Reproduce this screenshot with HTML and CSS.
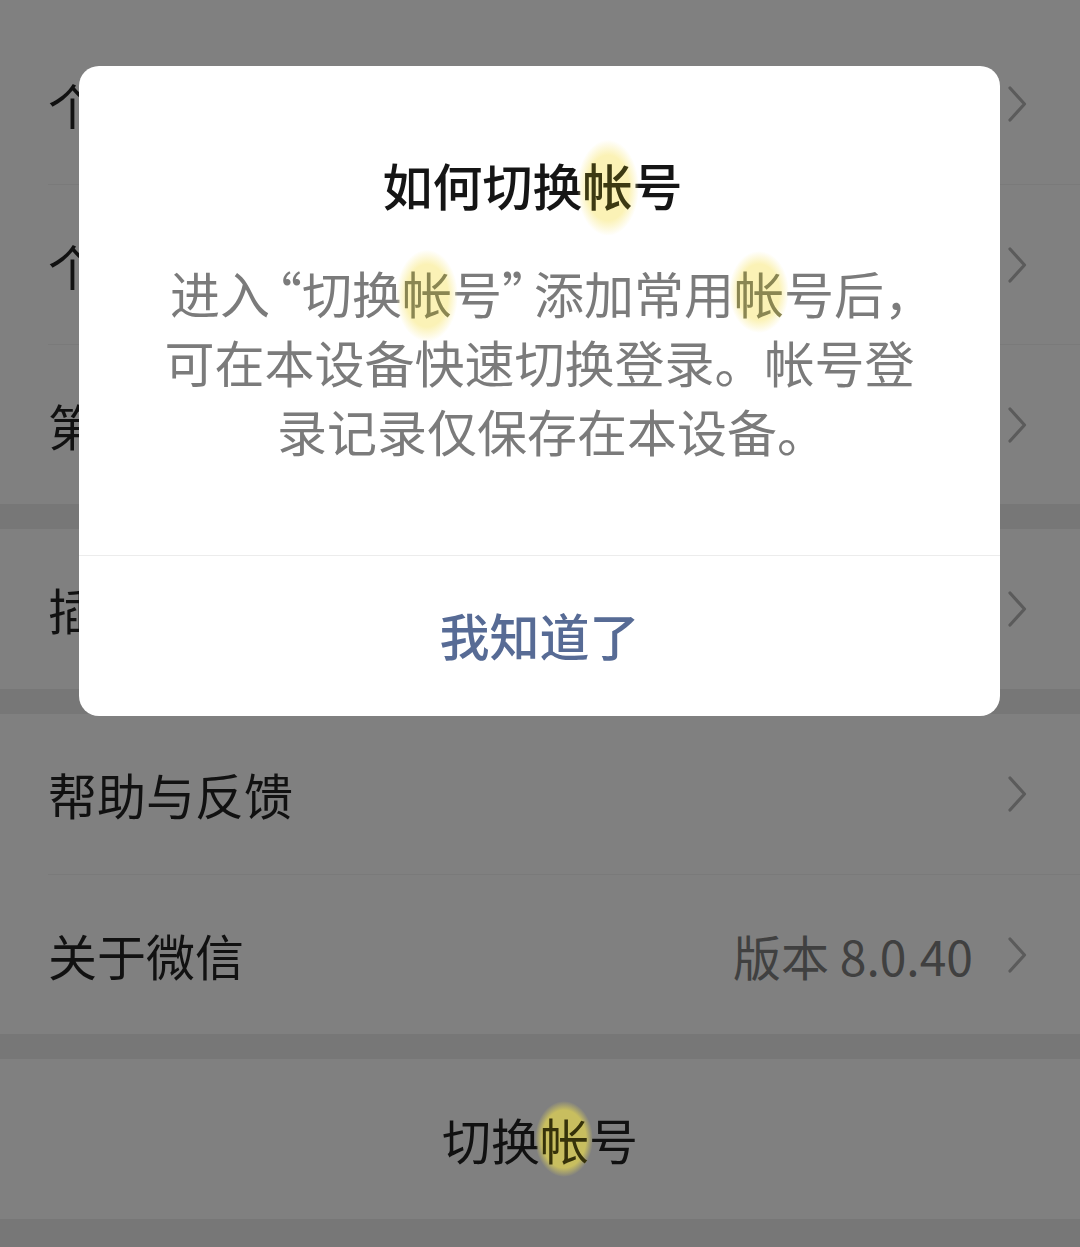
FILE: index.html
```html
<!DOCTYPE html>
<html lang="zh-CN">
<head>
<meta charset="utf-8">
<title>设置</title>
<link rel="stylesheet" href="styles.css">
</head>
<body>
<div class="screen">
  <div class="group group-first">
    <div class="cell">
      <span class="label">个人信息与权限</span>
      <svg class="chev" viewBox="0 0 20 36"><path d="M3 2 L17.5 18 L3 34"/></svg>
    </div>
    <div class="cell">
      <span class="label">个人信息收集清单</span>
      <svg class="chev" viewBox="0 0 20 36"><path d="M3 2 L17.5 18 L3 34"/></svg>
    </div>
    <div class="cell">
      <span class="label">第三方信息共享清单</span>
      <svg class="chev" viewBox="0 0 20 36"><path d="M3 2 L17.5 18 L3 34"/></svg>
    </div>
  </div>
  <div class="group">
    <div class="cell">
      <span class="label">插件</span>
      <svg class="chev" viewBox="0 0 20 36"><path d="M3 2 L17.5 18 L3 34"/></svg>
    </div>
  </div>
  <div class="group">
    <div class="cell">
      <span class="label">帮助与反馈</span>
      <svg class="chev" viewBox="0 0 20 36"><path d="M3 2 L17.5 18 L3 34"/></svg>
    </div>
    <div class="cell">
      <span class="label">关于微信</span>
      <span class="value">版本 8.0.40</span>
      <svg class="chev chev-after-value" viewBox="0 0 20 36"><path d="M3 2 L17.5 18 L3 34"/></svg>
    </div>
  </div>
  <div class="group">
    <div class="cell cell-center">
      <span class="label">切换<span class="hl hl-bottom">帐</span>号</span>
    </div>
  </div>
</div>

<div class="dialog">
  <div class="dialog-body">
    <h2 class="dialog-title">如何切换<span class="hl hl-title">帐</span>号</h2>
    <p class="dialog-text">进入<span class="q-open">“</span>切换<span class="hl hl-body hl-b1">帐</span>号<span class="q-close">”</span>添加常用<span class="hl hl-body hl-b2">帐</span>号后<span class="end-punct">，</span><br>可在本设备快速切换登录。帐号登<br>录记录仅保存在本设备<span class="end-punct">。</span></p>
  </div>
  <div class="dialog-btn">我知道了</div>
</div>
</body>
</html>
```

FILE: styles.css
```css
* {
  box-sizing: border-box;
}

html, body {
  margin: 0;
  padding: 0;
}

body {
  width: 1080px;
  height: 1247px;
  overflow: hidden;
  background: #777777;
  font-family: "Noto Sans CJK SC", "Noto Sans", "Liberation Sans", sans-serif;
  position: relative;
}

.screen {
  display: flex;
  flex-direction: column;
  gap: 25px;
}

.group {
  background: #808080;
}

.group-first {
  padding-top: 24px;
}

.cell {
  height: 160px;
  margin-left: 48px;
  padding-right: 53px;
  display: flex;
  align-items: center;
}

.cell + .cell {
  border-top: 1px solid #7a7a7a;
}

.cell-center {
  margin-left: 0;
  padding-right: 0;
  justify-content: center;
}

.label {
  font-size: 49px;
  line-height: 60px;
  color: #111111;
}

.value {
  margin-left: auto;
  font-size: 48px;
  line-height: 60px;
  color: #404040;
}

.chev {
  width: 20px;
  height: 36px;
  margin-left: auto;
  flex: none;
}

.chev-after-value {
  margin-left: 34px;
}

.chev path {
  fill: none;
  stroke: #5b5b5b;
  stroke-width: 3.2;
  stroke-linecap: round;
  stroke-linejoin: round;
}

/* dialog (overlays the list) */
.dialog {
  position: absolute;
  left: 79px;
  top: 66px;
  width: 921px;
  background: #ffffff;
  border-radius: 20px;
  overflow: hidden;
}

.dialog-body {
  padding: 88px 40px 90px;
  text-align: center;
}

.dialog-title {
  margin: 0 14px 0 0;
  font-size: 50px;
  line-height: 60px;
  font-weight: 500;
  color: #151515;
}

.dialog-text {
  margin: 44px 0 0;
  font-size: 50px;
  line-height: 69px;
  color: #7b7b7b;
  white-space: nowrap;
}

.q-open {
  font-feature-settings: "halt" 1;
  margin-left: 7px;
}

.q-close {
  font-feature-settings: "halt" 1;
  margin-right: 7px;
}

.end-punct {
  font-feature-settings: "halt" 1;
}

.dialog-btn {
  height: 161px;
  padding-bottom: 4px;
  border-top: 1px solid #ececec;
  display: flex;
  align-items: center;
  justify-content: center;
  font-size: 50px;
  font-weight: 500;
  color: #576b95;
}

/* yellow highlighter marks */
.hl {
  position: relative;
  z-index: 0;
}

.hl::before {
  content: "";
  position: absolute;
  left: 50%;
  top: 50%;
  width: 62px;
  height: 96px;
  transform: translate(-50%, -46%);
  border-radius: 50%;
  z-index: -1;
  background: radial-gradient(ellipse closest-side, #fbf2b6 68%, rgba(251, 242, 182, 0));
}

.hl-title {
  color: #3c3912;
}

.hl-body {
  color: #8a8652;
}

.hl-b1::before {
  width: 62px;
  height: 92px;
}

.hl-b2::before {
  width: 60px;
  height: 82px;
  transform: translate(-50%, -50%);
}

.hl-bottom {
  color: #36320a;
}

.hl-bottom::before {
  width: 58px;
  height: 76px;
  transform: translate(-50%, -50%);
  background: radial-gradient(ellipse closest-side, #c8be5f 76%, rgba(200, 190, 95, 0));
}
```
